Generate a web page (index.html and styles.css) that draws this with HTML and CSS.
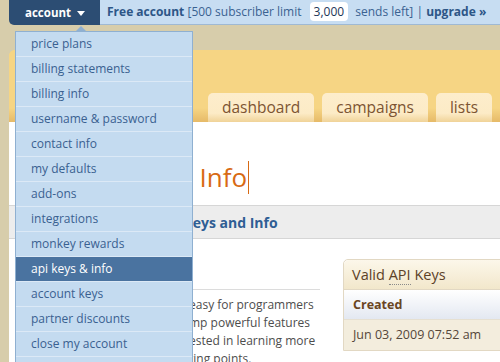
FILE: index.html
```html
<!DOCTYPE html>
<html lang="en">
<head>
    <meta charset="UTF-8">
    <meta name="viewport" content="width=device-width, initial-scale=1.0">
    <link rel="stylesheet" href="styles.css">
    <title>API Keys &amp; Info</title>
</head>
<body>
    <div class="topbar">
        <div class="account-tab">account
            <svg class="caret-down" width="8" height="5" viewBox="0 0 8 5"><path d="M0 0H8L4 5Z" fill="#ffffff"/></svg>
        </div>
        <div class="plan-bar">
            <strong>Free account</strong> [500 subscriber limit <span class="sends">3,000</span> sends left] | <a class="upgrade" href="#">upgrade &raquo;</a>
        </div>
    </div>

    <div class="page">
        <div class="page-head">
            <nav class="tabs">
                <a class="tab" href="#">dashboard</a>
                <a class="tab" href="#">campaigns</a>
                <a class="tab" href="#">lists</a>
            </nav>
        </div>

        <div class="page-body">
            <h1 class="title">API Keys &amp; Info<span class="cursor"></span></h1>

            <div class="section-bar">
                <h2>Manage Your API Keys and Info</h2>
            </div>

            <div class="columns">
                <div class="main-col">
                    <h3 class="col-head">About the API</h3>
                    <p class="intro">easy for programmers<br>mp powerful features<br>ested in learning more<br>ting points.</p>
                </div>
                <div class="side-col">
                    <div class="keys-box">
                        <div class="keys-head">Valid <abbr title="Application Programming Interface">API</abbr> Keys</div>
                        <div class="keys-label">Created</div>
                        <div class="keys-row">Jun 03, 2009 07:52 am</div>
                    </div>
                </div>
            </div>
        </div>
    </div>

    <ul class="account-menu">
        <li>price plans</li>
        <li>billing statements</li>
        <li>billing info</li>
        <li>username &amp; password</li>
        <li>contact info</li>
        <li>my defaults</li>
        <li>add-ons</li>
        <li>integrations</li>
        <li>monkey rewards</li>
        <li class="active">api keys &amp; info</li>
        <li>account keys</li>
        <li>partner discounts</li>
        <li>close my account</li>
        <li>log out</li>
    </ul>
</body>
</html>
```

FILE: styles.css
```css
body {
    margin: 0;
    padding: 0;
    background-color: #d7cdab;
    font-family: "Open Sans", "DejaVu Sans", sans-serif;
    height: 362px;
    overflow: hidden;
}

a {
    text-decoration: none;
}

/* top account bar */
.topbar {
    display: flex;
    height: 25px;
}

.account-tab {
    margin-left: 9px;
    width: 75px;
    padding-left: 16px;
    background-color: #2c4d73;
    border-bottom-left-radius: 5px;
    color: #ffffff;
    font-size: 11.5px;
    font-weight: bold;
    line-height: 25px;
}

.caret-down {
    margin-left: 3px;
    vertical-align: 1px;
}

.plan-bar {
    flex: 1;
    padding-left: 7px;
    background-color: #c7ddf2;
    border-bottom: 1px solid #9fb9d3;
    color: #3a6291;
    font-size: 12px;
    line-height: 24px;
    white-space: nowrap;
}

.plan-bar strong,
.upgrade {
    color: #2d5687;
    font-weight: bold;
}

.sends {
    margin: 0 4px 0 5px;
    padding: 1px 4px;
    background-color: #ffffff;
    border-radius: 4px;
    color: #1d3656;
}

/* yellow page frame */
.page {
    margin: 25px 0 0 9px;
    background-color: #f6d584;
    border-top-left-radius: 6px;
}

.page-head {
    height: 72px;
    display: flex;
    align-items: flex-end;
    background: linear-gradient(to bottom, #f6d584 0, #f6d584 58px, #e6ba68 72px);
    border-top-left-radius: 6px;
}

.tabs {
    display: flex;
    gap: 8px;
    padding-left: 199px;
}

.tab {
    height: 29px;
    padding: 0 14px;
    background: linear-gradient(to bottom, #fdedcc 0, #fcebc6 70%, #f0d398 100%);
    border-radius: 5px 5px 0 0;
    color: #7c5432;
    font-size: 15.5px;
    line-height: 29px;
}

/* white content */
.page-body {
    background-color: #ffffff;
    padding-top: 39px;
    min-height: 240px;
}

.title {
    margin: 0 0 11px 0;
    padding-left: 56px;
    color: #d86a14;
    font-size: 26px;
    font-weight: normal;
    line-height: 32px;
}

.cursor {
    display: inline-block;
    width: 1px;
    height: 33px;
    margin-left: 1px;
    background-color: #d86a14;
    vertical-align: -7px;
}

.section-bar {
    height: 32px;
    background-color: #ededed;
    border-top: 1px solid #d6d6d6;
    border-bottom: 1px solid #d6d6d6;
}

.section-bar h2 {
    margin: 0;
    padding-left: 52px;
    color: #2f5e94;
    font-size: 14px;
    line-height: 33px;
}

.columns {
    display: flex;
    gap: 23px;
    padding-left: 52px;
}

.main-col {
    flex-shrink: 0;
    width: 259px;
}

.col-head {
    margin: 0;
    height: 50px;
    border-bottom: 1px solid #dcdcdc;
    color: #5b4025;
    font-size: 13px;
    line-height: 48px;
}

.intro {
    margin: 6px 0 0 0;
    padding-left: 128px;
    color: #4d4d4d;
    font-size: 12px;
    line-height: 18px;
    white-space: nowrap;
}

.side-col {
    flex-shrink: 0;
    width: 180px;
    padding-top: 20px;
}

.keys-box {
    border: 1px solid #e2d8c3;
    border-radius: 5px 0 0 0;
    color: #5c4128;
}

.keys-head {
    height: 29px;
    padding-left: 8px;
    background: linear-gradient(to bottom, #fcf7ea 0, #f2e7cb 100%);
    border-bottom: 1px solid #e2d8c3;
    border-radius: 5px 0 0 0;
    font-size: 14.5px;
    line-height: 29px;
}

.keys-head abbr {
    text-decoration: none;
    border-bottom: 1px dotted #8a8a8a;
}

.keys-label {
    height: 29px;
    padding-left: 9px;
    background: linear-gradient(to bottom, #ffffff 0, #e3e8f1 100%);
    border-bottom: 1px solid #e6e0d2;
    color: #6a4522;
    font-size: 12.5px;
    font-weight: bold;
    line-height: 29px;
}

.keys-row {
    height: 30px;
    padding-left: 9px;
    background-color: #f3eddd;
    color: #55473a;
    font-size: 12.5px;
    line-height: 30px;
}

/* account dropdown */
.account-menu {
    position: absolute;
    top: 31px;
    left: 15px;
    width: 176px;
    margin: 0;
    padding: 0;
    list-style: none;
    background-color: #c4dbf0;
    border: 1px solid #8fb0d1;
}

.account-menu::before {
    content: "";
    position: absolute;
    top: -6px;
    left: 60px;
    border-left: 5px solid transparent;
    border-right: 5px solid transparent;
    border-bottom: 5px solid #8fb0d1;
}

.account-menu li {
    height: 24px;
    padding-left: 15px;
    border-bottom: 1px solid #dce9f6;
    color: #3a6190;
    font-size: 12px;
    line-height: 24px;
}

.account-menu li.active {
    background-color: #4a73a0;
    color: #ffffff;
}
```
